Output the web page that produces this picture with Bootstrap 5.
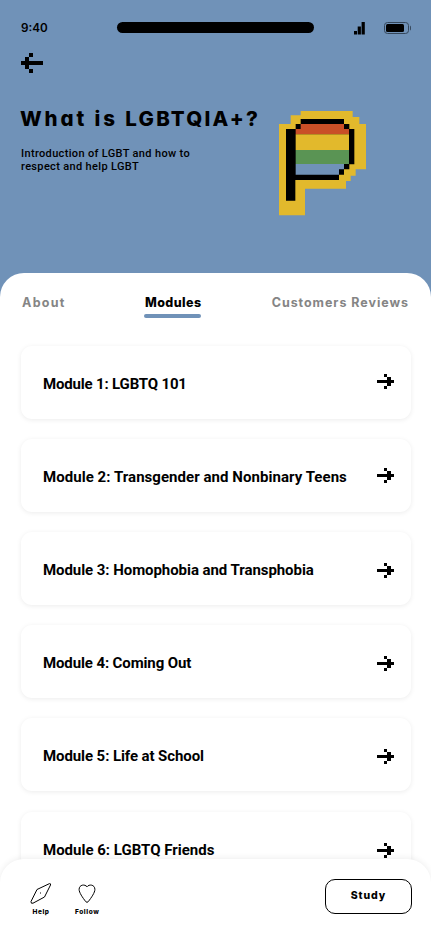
<!DOCTYPE html>
<html lang="en">
<head>
<meta charset="utf-8">
<meta name="viewport" content="width=device-width, initial-scale=1">
<title>What is LGBTQIA+?</title>
<link href="https://cdn.jsdelivr.net/npm/bootstrap@5.3.0/dist/css/bootstrap.min.css" rel="stylesheet">
<style>
body{font-family:Roboto,"Liberation Sans",sans-serif;color:#000;background:#fff}
svg{display:block}
.screen{width:431px;height:932px;background:#7092b8}
.hero{height:273px}
.status{height:53px;padding:22px 20px 0 21px}
.clock{font:600 11.7px/12px Inter,sans-serif;width:96px}
.island{width:197px;height:11px;background:#000}
.signal{margin-right:19px}
.hero-copy{width:258px;padding-left:21px}
.logo{margin-left:21px}
.geo{font-family:Inter,sans-serif;font-weight:800;font-feature-settings:"cv11","ss03"}
.title{font-size:20.5px;line-height:26px;letter-spacing:2.2px;white-space:nowrap;margin-left:-1px;padding-top:9px}
.title span{letter-spacing:2.9px}
.intro{font-size:11px;line-height:13px;letter-spacing:.34px;white-space:nowrap;margin-top:15px}
.sheet{height:659px;border-radius:24px 24px 0 0}
.tabs{height:73px;padding:20px 22px 0}
.tabs a{font-size:12.5px;line-height:20px;letter-spacing:.95px;font-weight:700;color:#858585;text-decoration:none;white-space:nowrap}
.tabs a:first-child{letter-spacing:1.3px}
.tabs .current{color:#000;font-weight:800;letter-spacing:.4px;margin-left:9px}
.bar-line{height:4px;border-radius:2px;background:#7092b8;margin:1px 0 0 -1px}
.modules{padding:0 20px 0 21px;gap:20.1px}
.module{height:73px;flex:none;border-radius:11px;box-shadow:0 1px 5px rgba(0,0,0,.08);padding:3px 17px 0 22px;font-size:15px;font-weight:700}
.module svg{margin-top:1px}
.module:nth-child(1) svg{margin-top:-5px}
.module:nth-child(2) svg{margin-top:-3px}
.module:nth-child(1){letter-spacing:-.17px}
.module:nth-child(2){letter-spacing:.05px}
.module:nth-child(3){letter-spacing:-.06px}
.module:nth-child(4){letter-spacing:-.12px}
.module:nth-child(5){letter-spacing:-.09px}
.module:nth-child(6){margin-top:.7px}
.footer-bar{height:73px;border-radius:24px 24px 0 0;box-shadow:0 -1px 6px rgba(0,0,0,.07);padding:20px 19px 0 30px}
.tool{font-size:6.5px;line-height:9px;letter-spacing:.6px}
.tool + .tool{margin-left:23px}
.study{width:87px;height:35px;border:1px solid #000;border-radius:10px;font-size:10.5px;letter-spacing:.9px;color:#000;padding:0 0 2px}
</style>
</head>
<body>
<svg width="0" height="0" class="position-absolute"><defs>
<path id="arrow" d="M0 6H10V3H7V0H10V3H14V6H17V9H14V12H10V15H7V12H10V9H0Z" shape-rendering="crispEdges"/>
</defs></svg>
<main class="screen overflow-hidden position-relative">
<header class="hero">
  <div class="status d-flex align-items-start">
    <span class="clock">9:40</span>
    <div class="island rounded-pill"></div>
    <svg class="signal ms-auto" width="11" height="13"><path d="M0 9h3v3.5H0zM3.7 4.5h3.2v8H3.7zM7.6 0h3.2v12.5H7.6z"/></svg>
    <svg width="27" height="12"><rect x=".5" y=".5" width="24" height="11" rx="3" fill="none" stroke="#34465a"/><rect x="2" y="2" width="18" height="8" rx="1.5"/><path d="M26 3.5q1 0 1 2.5t-1 2.5z" fill="#34465a"/></svg>
  </div>
  <div class="d-flex">
    <div class="hero-copy flex-shrink-0">
      <svg width="22" height="20" shape-rendering="crispEdges"><path d="M0 8H4V4H8V0H12V4H8V8H22V12H8V16H12V20H8V16H4V12H0Z"/></svg>
      <h1 class="title geo mb-0 mt-4"><span>What is </span>LGBTQIA+?</h1>
      <p class="intro mb-0 fw-medium">Introduction of LGBT and how to<br>respect and help LGBT</p>
    </div>
    <svg class="logo mt-5" width="87" height="115" viewBox="27 3 261 345">
      <path fill="#e2b92c" d="M92 33H248V51H268V72H288V208H257V227H242V243H228V266H105V346H27V72H62V46H92Z"/>
      <path d="M48 87H77V72H92V57H222V72H238V87H253V193H238V208H222V224H207V240H76V302H48Z"/>
      <path fill="#c94f27" d="M92 72H222V87H237V103H77V87H92Z"/>
      <path fill="#e2b92c" d="M77 103H237V150H77Z"/>
      <path fill="#5a9454" d="M77 150H237V192H77Z"/>
      <path fill="#7092b8" d="M77 192H222V208H207V224H77Z"/>
    </svg>
  </div>
</header>
<section class="sheet bg-white">
  <nav class="tabs geo d-flex justify-content-between">
    <a href="#">About</a>
    <a href="#" class="current">Modules<div class="bar-line"></div></a>
    <a href="#">Customers Reviews</a>
  </nav>
  <div class="modules d-flex flex-column">
    <div class="module bg-white d-flex align-items-center justify-content-between"><span>Module 1: LGBTQ 101</span><svg width="17" height="15"><use href="#arrow"/></svg></div>
    <div class="module bg-white d-flex align-items-center justify-content-between"><span>Module 2: Transgender and Nonbinary Teens</span><svg width="17" height="15"><use href="#arrow"/></svg></div>
    <div class="module bg-white d-flex align-items-center justify-content-between"><span>Module 3: Homophobia and Transphobia</span><svg width="17" height="15"><use href="#arrow"/></svg></div>
    <div class="module bg-white d-flex align-items-center justify-content-between"><span>Module 4: Coming Out</span><svg width="17" height="15"><use href="#arrow"/></svg></div>
    <div class="module bg-white d-flex align-items-center justify-content-between"><span>Module 5: Life at School</span><svg width="17" height="15"><use href="#arrow"/></svg></div>
    <div class="module bg-white d-flex align-items-center justify-content-between"><span>Module 6: LGBTQ Friends</span><svg width="17" height="15"><use href="#arrow"/></svg></div>
  </div>
</section>
<footer class="footer-bar geo bg-white position-absolute bottom-0 start-0 w-100 d-flex align-items-start">
  <div class="tool text-center pt-1"><svg class="mx-auto mb-1" width="22" height="21" fill="none" stroke="#000"><path d="M19.5.6Q21 .4 20.5 2L14.5 14 3 20.2Q.8 21 1 18.5L7 6.5Z"/><path d="M10 10h1"/></svg>Help</div>
  <div class="tool text-center pt-1"><svg class="mx-auto mb-1" width="18" height="21" fill="none" stroke="#000"><path d="M9 3.8C7 1 1.2 1.4 1.1 6.4 1.1 9.5 4.5 14.5 7.8 18.7Q9 20 10.2 18.7C13.5 14.5 16.9 9.5 16.9 6.4 16.8 1.4 11 1 9 3.8Z"/></svg>Follow</div>
  <button class="btn study geo ms-auto">Study</button>
</footer>
</main>
<script src="https://cdn.jsdelivr.net/npm/bootstrap@5.3.0/dist/js/bootstrap.bundle.min.js"></script>
</body>
</html>
